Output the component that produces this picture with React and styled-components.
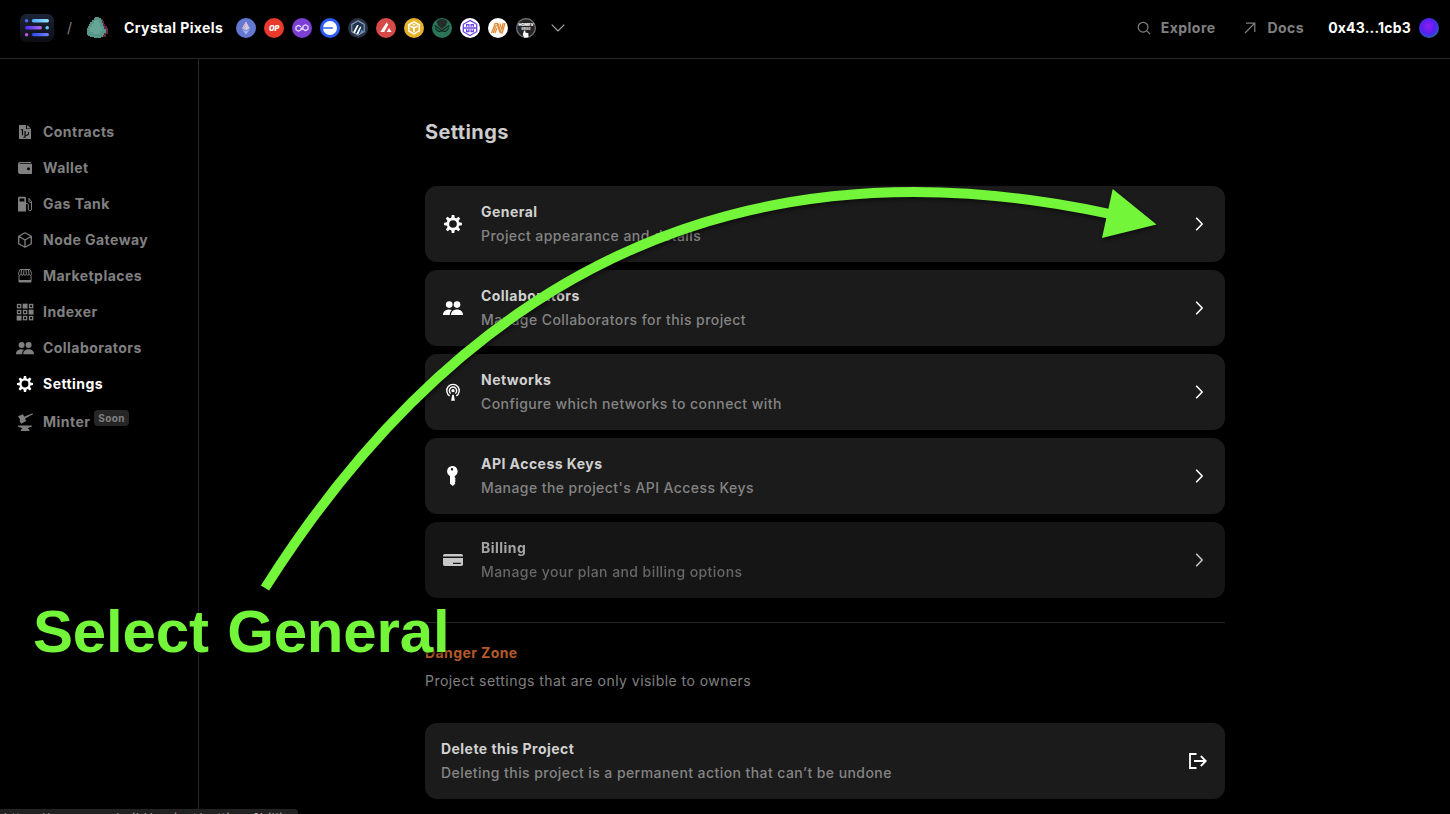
import React from 'react';
import styled, { createGlobalStyle } from 'styled-components';

const GlobalStyle = createGlobalStyle`
  * { box-sizing: border-box; }
  html, body { margin: 0; background: #000; }
  body {
    width: 1450px;
    height: 814px;
    overflow: hidden;
    font-family: Inter, 'Liberation Sans', sans-serif;
    font-size: 14px;
    letter-spacing: 0.46px;
    color: #ccc;
  }
  svg { display: block; flex: none; }
`;

const Page = styled.div`
  position: relative;
  width: 1450px;
  height: 814px;
  display: flex;
  flex-direction: column;
  overflow: hidden;
`;

const Header = styled.header`
  height: 59px;
  flex: none;
  display: flex;
  align-items: center;
  justify-content: space-between;
  padding: 0 11px 3px 20px;
  border-bottom: 1px solid #262626;
`;

const HeaderSide = styled.div`
  display: flex;
  align-items: center;
`;

const Slash = styled.span`
  width: 33px;
  padding-left: 13px;
  color: #808080;
`;

const ProjectName = styled.span`
  width: 112px;
  padding-left: 15px;
  white-space: nowrap;
  font-weight: 700;
  color: #fff;
  letter-spacing: 0.4px;
`;

const Chains = styled.div`
  display: flex;
  gap: 8px;
  margin: 0 15px 0 15px;
`;

const HeaderLink = styled.a`
  display: flex;
  align-items: center;
  gap: ${(p) => p.$gap}px;
  margin-right: ${(p) => p.$after}px;
  font-weight: 700;
  color: #808080;
`;

const Account = styled.span`
  font-weight: 700;
  color: #fff;
  letter-spacing: 0.2px;
  margin-right: 8px;
`;

const Avatar = styled.span`
  width: 20px;
  height: 20px;
  border-radius: 50%;
  background: radial-gradient(circle at 46% 42%, #8f20f0 0%, #5a1ef2 42%, #3a38e0 58%, #2f62b0 72%);
`;

const Body = styled.div`
  flex: 1;
  display: flex;
  min-height: 0;
`;

const Sidebar = styled.nav`
  width: 199px;
  flex: none;
  border-right: 1px solid #262626;
  padding: 54px 0 0 16px;
`;

const NavItem = styled.a`
  height: ${(p) => (p.$tall ? 40 : 36)}px;
  display: flex;
  align-items: center;
  gap: 9px;
  font-weight: 700;
  color: ${(p) => (p.$active ? '#fff' : '#808080')};

  & > svg {
    margin-top: 1px;
  }
`;

const Soon = styled.span`
  height: 16px;
  margin: 0 0 7px -5px;
  padding: 0 4px;
  border-radius: 4px;
  background: #262626;
  font-size: 10px;
  line-height: 17px;
  letter-spacing: 0.4px;
`;

const Main = styled.main`
  flex: 1;
  padding: 57px 0 0 226px;
`;

const Content = styled.div`
  width: 800px;
`;

const Title = styled.h1`
  margin: 0 0 38px;
  font-size: 20px;
  line-height: 32px;
  font-weight: 700;
  letter-spacing: 0.4px;
`;

const CardList = styled.div`
  display: flex;
  flex-direction: column;
  gap: 8px;
`;

const Card = styled.div`
  height: 76px;
  border-radius: 12px;
  background: #1b1b1b;
  display: flex;
  align-items: center;
  padding: 0 16px;
  opacity: ${(p) => (p.$dim ? 0.78 : 1)};
  color: #fff;
`;

const CardText = styled.div`
  flex: 1;
  padding-left: ${(p) => (p.$indent ? 16 : 0)}px;
`;

const CardTitle = styled.div`
  line-height: 24px;
  font-weight: 700;
  color: #d1d1d1;
`;

const CardNote = styled.div`
  line-height: 24px;
  font-weight: 500;
  letter-spacing: 0.43px;
  color: #848484;
`;

const Divider = styled.hr`
  margin: 24px 0 20px;
  border: 0;
  height: 1px;
  background: #262626;
`;

const DangerTitle = styled.h2`
  margin: 0 0 4px;
  font-size: 14px;
  line-height: 20px;
  font-weight: 700;
  letter-spacing: 0.4px;
  color: #b45a28;
`;

const DangerNote = styled.p`
  margin: 0 0 28px;
  line-height: 28px;
  color: #808080;
`;

const StatusBar = styled.div`
  position: absolute;
  left: 0;
  top: 809px;
  width: 298px;
  height: 20px;
  padding-left: 4px;
  border-top-right-radius: 4px;
  background: #222;
  color: #aaa;
  font-size: 12px;
  line-height: 18px;
  letter-spacing: 0.75px;
  white-space: nowrap;
`;

const ArrowOverlay = styled.svg`
  position: absolute;
  left: 0;
  top: 0;
  filter: drop-shadow(1px 2px 2px rgba(0, 0, 0, 0.55));
`;

const Callout = styled.div`
  position: absolute;
  left: 33px;
  top: 597px;
  font: bold 60px/69px 'Liberation Sans', Arial, sans-serif;
  letter-spacing: -0.18px;
  word-spacing: 2px;
  color: #73f539;
  white-space: nowrap;
  text-shadow: 1px 2px 3px rgba(0, 0, 0, 0.5);
`;

const Logo = () => (
  <svg width="34" height="28" viewBox="0 0 34 28">
    <defs>
      <linearGradient id="lg-bg" x1="0" y1="0" x2="0" y2="1"><stop stopColor="#1d2438" /><stop offset="1" stopColor="#0d0e14" /></linearGradient>
      <linearGradient id="lg-a"><stop stopColor="#4fa8ff" /><stop offset="1" stopColor="#95e4f8" /></linearGradient>
      <linearGradient id="lg-b"><stop stopColor="#4a2ff5" /><stop offset="1" stopColor="#a968e8" /></linearGradient>
      <linearGradient id="lg-c"><stop stopColor="#2f49f0" /><stop offset="1" stopColor="#7480f5" /></linearGradient>
    </defs>
    <rect width="34" height="28" rx="6.5" fill="url(#lg-bg)" />
    <circle cx="6.6" cy="6.8" r="1.8" fill="#4b6cf5" />
    <rect x="11.8" y="5.1" width="17.2" height="3.4" rx="1.7" fill="url(#lg-a)" />
    <rect x="5" y="12" width="17" height="3.4" rx="1.7" fill="url(#lg-b)" />
    <circle cx="27.2" cy="13.8" r="1.8" fill="#62c8f8" />
    <circle cx="6.6" cy="20.7" r="1.8" fill="#c44fe0" />
    <rect x="11.8" y="18.9" width="17.2" height="3.4" rx="1.7" fill="url(#lg-c)" />
  </svg>
);

const Gem = () => (
  <svg width="22" height="22" viewBox="0 0 22 22">
    <path d="M13 2h3v2h1v3h1v2h2v2h1v6h-2v3h-5z" fill="#622743" />
    <path d="M8 0h4v1h2v2h1v3h1v3h1v3h2v4h-2v2h-1v2h-2v1H7v-1H3v-1H1v-1H0v-7h1v-2h1V7h1V5h2V3h2V1h1z" fill="#56978a" />
    <path d="M8 3h4v3h1v4h2v4h-2v3H6v-2H3v-5h2V7h2V4h1z" fill="#67a596" />
  </svg>
);

const chainGlyphs = [
  { bg: '#6478d2', art: <><path d="M10 3.5l3.8 6.7L10 12.4 6.2 10.2z" fill="#c5cfe6" /><path d="M10 3.5v8.9l-3.8-2.2z" fill="#d8b6c8" /><path d="M6.2 11.2L10 13.4l3.8-2.2L10 16.6z" fill="#a8c0f0" /></> },
  { bg: '#ea3a2c', art: <text x="10" y="12.7" textAnchor="middle" fontSize="7.2" fontWeight="900" fontStyle="italic" fill="#fff" letterSpacing="-0.1">OP</text> },
  { bg: '#7b3fd4', art: <path d="M9 7.6L6.500 6.200 4 7.600v3L6.500 12 9 10.600l2-1.300M9 10.600V9.300l2-1.300V7l2.500-1.400L16 7v3l-2.500 1.400L11 10V8" transform="translate(0 1.2)" fill="none" stroke="#e6dafa" strokeWidth="1.3" strokeLinejoin="round" /> },
  { bg: '#2b5cf6', art: <><circle cx="10" cy="10" r="7" fill="#fff" /><path d="M3 9.200h9.800v1.600H3z" fill="#3b68e8" /></> },
  { bg: '#293244', art: <><path d="M10 2.800l6.200 3.600v7.200L10 17.200l-6.200-3.600V6.400z" fill="#223550" stroke="#8ba2b8" strokeWidth="1.1" /><path d="M5.200 14.200L9 7h1.800l-4 8.200zM8.200 16l3.900-7.200h1.300l-3 7.200z" fill="#fff" /><path d="M11.800 15.500l2-4.300 1.400 2.600z" fill="#4f9de8" /></> },
  { bg: '#d64b47', art: <path d="M10.700 4.200L12.200 6.800 8.200 14H4.300zM13 10l2.700 4h-5.100z" fill="#fff" /> },
  { bg: '#e5b32e', art: <><path d="M10 3.800l5.200 3v6.100L10 16l-5.200-3V6.800z" fill="none" stroke="#fff" strokeWidth="1.5" /><path d="M6.400 8L10 10l3.600-2M10 10v4" fill="none" stroke="#fff" strokeWidth="1.7" /><path d="M10 5.700l1.700 1-1.700 1-1.700-1z" fill="#fff" /></> },
  { bg: '#2a7458', art: <><path d="M4.500 3.200Q10-1 15.500 3.200L14 7.500 10 11 6 7.500z" fill="#242b2a" /><path d="M2.600 7.400l4.800 3.300 2.600 2.100 2.600-2.100 4.800-3.300M3.500 9.500c.5 4 4.500 4.500 6.500 3.300 2 1.200 6 .7 6.500-3.300" fill="none" stroke="#16271f" strokeWidth="1.2" /></> },
  { bg: '#fff', art: <g fill="none" stroke="#6b45e0" strokeWidth="1.3"><path d="M10 2.400l6.700 3.900v7.400L10 17.600l-6.700-3.900V6.300z" /><path d="M3.400 10h13.200M6.600 8.800V6.600h2.300v2.200M11.100 8.800V6.600h2.300v2.200M6.600 11.200v2.300h2.300v-2.300M11.100 11.200v2.300h2.300v-2.300" /></g> },
  { bg: '#fff', art: <g fill="none" stroke="#e08a35" strokeWidth="1.25"><path d="M3.500 15L7.300 5.300M5.200 15L8.300 7.200M7 15l2-5M7.300 5.300h1.500l3.400 9.400M9.600 5l3.600 9.800h1L17 5M11.800 5.500l2 5.500L15.300 5" /></g> },
  { bg: '#242426', art: <><circle cx="10" cy="10" r="9.3" fill="none" stroke="#747476" strokeWidth="1.2" /><text x="10" y="8.4" textAnchor="middle" fontSize="3.9" fontWeight="900" fill="#fff" letterSpacing="0">HOMEV</text><text x="10" y="12.4" textAnchor="middle" fontSize="3.6" fontWeight="900" fill="#ddd" letterSpacing="0">ERSE</text><path d="M8 12.500h1.300v2l3 .8.200 4-4.200.4-1.500-3z" fill="#fff" /></> },
];

const Chain = ({ bg, art }) => (
  <svg width="20" height="20" viewBox="0 0 20 20">
    <circle cx="10" cy="10" r="10" fill={bg} />
    {art}
  </svg>
);

const Stroke = ({ w, h, d, width = 1.4, color = 'currentColor' }) => (
  <svg width={w} height={h} viewBox={`0 0 ${w} ${h}`} fill="none" stroke={color} strokeWidth={width}>
    <path d={d} />
  </svg>
);

const Icon = ({ size = 18, children }) => (
  <svg width={size} height={size} viewBox="0 0 18 18" fill="currentColor">{children}</svg>
);

const gearTeeth = [0, 45, 90, 135, 180, 225, 270, 315];
const gear = (
  <>
    <circle cx="9" cy="9" r="4.6" fill="none" stroke="currentColor" strokeWidth="2.3" />
    {gearTeeth.map((a) => (
      <path key={a} d="M7.400 3.900L7.900 1h2.200l.5 2.900z" transform={`rotate(${a} 9 9)`} />
    ))}
  </>
);
const people = (
  <>
    <circle cx="5.6" cy="5.9" r="3" />
    <circle cx="12.6" cy="5.9" r="3" />
    <path d="M0 15.200c0-3 2.400-4.900 5.400-4.900 1 0 1.900.2 2.600.6-1.200 1-1.900 2.500-1.900 4.300z" />
    <path d="M7.200 15.200c0-3 2.300-4.900 5.400-4.900S18 12.200 18 15.200z" />
  </>
);

const cells = [0, 1, 2].flatMap((r) => [0, 1, 2].map((c) => [r, c]));
const solid = ['0-1', '1-2', '2-0'];

const icons = {
  contracts: (
    <path fillRule="evenodd" d="M3 2h7v4h5v10H3zM11 2l4 3.400h-4zM4.800 6.200v1h1.100v5h1.200v-6zM8.500 8v5.800H7.400v1h2.200v-2c2.400 0 3.400-.9 3.400-2.300V9h-1v1.500c0 .9-.8 1.300-2.400 1.300V8z" />
  ),
  wallet: (
    <path fillRule="evenodd" d="M4 3h11v.9H4.400a.9.900 0 00-.9.900h12.500V15H4a2 2 0 01-2-2V5a2 2 0 012-2zM12.500 8.300a1.500 1.500 0 100 3 1.500 1.500 0 000-3z" />
  ),
  gas: (
    <>
      <path fillRule="evenodd" d="M3.200 1.800h5.600A1.200 1.200 0 0110 3v13.500H2V3a1.200 1.200 0 011.200-1.200zM3.600 3.400v3h4.800v-3z" />
      <path d="M10 8.600h1.300q1 0 1 1v4.500q0 1.600 1.600 1.600t1.600-1.600V6.500L12.600 3M13 3.500v3.300l2.300 1.100" fill="none" stroke="currentColor" strokeWidth="1" />
    </>
  ),
  node: (
    <path d="M9 1.800l6.300 3.500v7.400L9 16.200l-6.300-3.500V5.300zM2.700 5.300L9 9l6.300-3.700M9 9v7.200" fill="none" stroke="currentColor" strokeWidth="1.3" strokeLinejoin="round" />
  ),
  market: (
    <g fill="none" stroke="currentColor" strokeWidth="1">
      <path d="M4 2.500h10l1.600 4v1q-1.300 1.500-2.600 0-1.300 1.500-2.600 0-1.400 1.500-2.800 0-1.300 1.500-2.600 0-1.300 1.500-2.600 0v-1zM5.600 2.500L5 7.500M8 2.500l-.4 5M10 2.500l.4 5M12.400 2.500l.6 5M3 8.500V15h12V8.500" />
      <path d="M3 14h12" strokeWidth="2" />
    </g>
  ),
  indexer: cells.map(([r, c]) => {
    const on = solid.includes(`${r}-${c}`);
    return <rect key={`${r}${c}`} x={1.5 + c * 6} y={1.5 + r * 6} width="3.2" height="3.2" fill={on ? 'currentColor' : 'none'} stroke="currentColor" strokeWidth={on ? 1.7 : 1.3} />;
  }),
  people,
  gear,
  minter: (
    <>
      <path d="M2 3.200l5-2 1.200 2.600L16.500.2l.5 1L9 5.400l1.200 2.600-5 2.800L3.600 8l.6-1.200z" />
      <path d="M2.200 12.500h13.600v1.300q-3 .2-4 1.700l1.600 1.200V18H4.800v-1.300L6.400 15.500q-1.200-1.300-4.200-1.600z" />
    </>
  ),
  network: (
    <>
      <g fill="none" stroke="currentColor" strokeWidth="1.25">
        <path d="M6.100 12.500A5.600 5.600 0 1111.900 12.500" />
        <path d="M7 10.400A3.300 3.300 0 1111 10.400" />
      </g>
      <circle cx="9" cy="7.8" r="1.5" />
      <path d="M8.300 11.500h1.400l1 5.300H7.300z" />
    </>
  ),
  key: (
    <path fillRule="evenodd" d="M8.200 0a4.900 4.900 0 012.400 9.200v1.300l.9.900-.9 1.100.9 1-.9 1.200.5 1-2.100 2.200-2.700-1.900V9.200A4.900 4.900 0 018.200 0zM8.100 1.800a1.100 1.100 0 100 2.200 1.100 1.100 0 000-2.200z" />
  ),
  card: (
    <>
      <path d="M1.500 3.600h15A1.500 1.500 0 0118 5.100v.7H0v-.7a1.500 1.500 0 011.500-1.500z" />
      <path fillRule="evenodd" d="M0 7.300h18v5.600a1.500 1.500 0 01-1.500 1.500h-15A1.500 1.500 0 010 12.900zM9 11.500v1h7v-1z" />
    </>
  ),
};

const navItems = [
  ['Contracts', 'contracts'],
  ['Wallet', 'wallet'],
  ['Gas Tank', 'gas'],
  ['Node Gateway', 'node'],
  ['Marketplaces', 'market'],
  ['Indexer', 'indexer'],
  ['Collaborators', 'people'],
  ['Settings', 'gear'],
  ['Minter', 'minter'],
];

const cards = [
  ['General', 'Project appearance and details', 'gear'],
  ['Collaborators', 'Manage Collaborators for this project', 'people'],
  ['Networks', 'Configure which networks to connect with', 'network'],
  ['API Access Keys', "Manage the project's API Access Keys", 'key'],
  ['Billing', 'Manage your plan and billing options', 'card'],
];

const CardIcon = styled.span`
  width: 24px;
  display: flex;
  justify-content: center;
`;

const CardEnd = styled.span`
  width: ${(p) => p.$width || 20}px;
  display: flex;
  justify-content: center;
`;

export default function App() {
  return (
    <Page>
      <GlobalStyle />
      <Header>
        <HeaderSide>
          <Logo />
          <Slash>/</Slash>
          <Gem />
          <ProjectName>Crystal Pixels</ProjectName>
          <Chains>
            {chainGlyphs.map((c, i) => <Chain key={i} {...c} />)}
          </Chains>
          <Stroke w={14} h={8} d="M.7.700l6.300 6.300 6.300-6.300" width={1.2} color="#a8a8a8" />
        </HeaderSide>
        <HeaderSide>
          <HeaderLink $gap={10} $after={28}>
            <Stroke w={14} h={14} d="M11 6.200a4.900 4.900 0 11-9.800 0 4.900 4.900 0 019.800 0zM9.600 9.700l3.500 3.500" width={1.2} />
            Explore
          </HeaderLink>
          <HeaderLink $gap={12} $after={24}>
            <Stroke w={12} h={12} d="M1 11L10.500 1.500M2 1.200h8.800v8.800" width={1.2} />
            Docs
          </HeaderLink>
          <Account>0x43...1cb3</Account>
          <Avatar />
        </HeaderSide>
      </Header>
      <Body>
        <Sidebar>
          {navItems.map(([label, icon]) => (
            <NavItem key={label} $active={label === 'Settings'} $tall={label === 'Minter'}>
              <Icon>{icons[icon]}</Icon>
              {label}
              {label === 'Minter' && <Soon>Soon</Soon>}
            </NavItem>
          ))}
        </Sidebar>
        <Main>
          <Content>
            <Title>Settings</Title>
            <CardList>
              {cards.map(([title, note, icon]) => (
                <Card key={title} $dim={title === 'Billing'}>
                  <CardIcon><Icon size={20}>{icons[icon]}</Icon></CardIcon>
                  <CardText $indent>
                    <CardTitle>{title}</CardTitle>
                    <CardNote>{note}</CardNote>
                  </CardText>
                  <CardEnd><Stroke w={8} h={14} d="M1.200.800L7.200 7 1.200 13.200" width={1.6} /></CardEnd>
                </Card>
              ))}
            </CardList>
            <Divider />
            <DangerTitle>Danger Zone</DangerTitle>
            <DangerNote>Project settings that are only visible to owners</DangerNote>
            <Card>
              <CardText>
                <CardTitle>Delete this Project</CardTitle>
                <CardNote>Deleting this project is a permanent action that can’t be undone</CardNote>
              </CardText>
              <CardEnd $width={22}>
                <Stroke w={18} h={16} d="M7.500 1H1v14h6.500M5 8h12M11.800 3l5 5-5 5" width={1.8} />
              </CardEnd>
            </Card>
          </Content>
        </Main>
      </Body>
      <StatusBar>https://sequence.build/project/settings?billing</StatusBar>
      <ArrowOverlay width="1450" height="814" viewBox="0 0 1450 814">
        <path d="M265 588Q574.800 98.500 1110 214" fill="none" stroke="#73f539" strokeWidth="9.8" />
        <path d="M1112.700 189L1156.500 224.500 1102 238z" fill="#73f539" />
      </ArrowOverlay>
      <Callout>Select General</Callout>
    </Page>
  );
}
